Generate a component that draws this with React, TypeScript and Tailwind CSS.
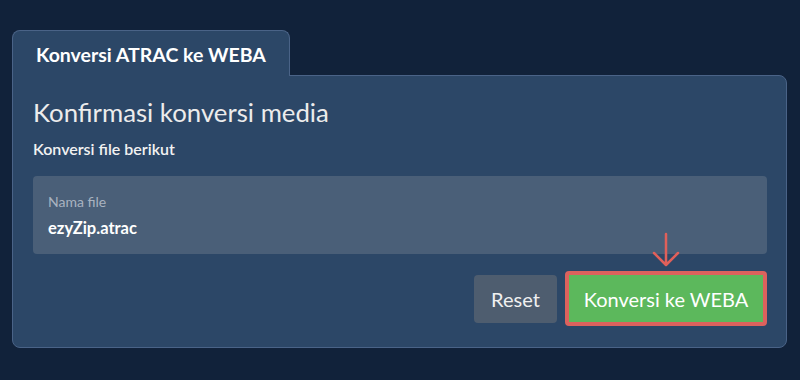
import React from "react";

export default function App() {
  return (
    <div
      className="w-[800px] h-[380px] bg-[#11223a] pl-[12px] pr-[13px] pt-[30px]"
      style={{ fontFamily: "Lato, 'Noto Sans', sans-serif" }}
    >
      <div className="relative z-10 -mb-px w-[278px] h-[46px] rounded-t-[8px] border border-b-0 border-[#4a6387] bg-[#2c4767] pl-[23px] pt-[12px] text-[19.5px] font-bold text-white leading-[24px]">
        Konversi ATRAC ke WEBA
      </div>
      <div className="rounded-b-[8px] rounded-tr-[8px] border border-[#4a6387] bg-[#2c4767] pl-[20px] pr-[19px] pt-[20px] pb-[21px]">
        <h1 className="text-[25.75px] leading-[32px] text-[#ececec]">Konfirmasi konversi media</h1>
        <p className="mt-[11px] text-[16px] leading-[20px] font-semibold text-[#f2f2f2]">Konversi file berikut</p>
        <div className="mt-[17px] h-[78px] rounded-[4px] bg-[#4a5f78] px-[15px] pt-[17px]">
          <div className="text-[14px] leading-[18px] text-[#a9b3c0]">Nama file</div>
          <div className="mt-[7px] text-[16.5px] leading-[20px] font-bold text-white">ezyZip.atrac</div>
        </div>
        <div className="mt-[17px] flex items-center justify-end gap-[8px]">
          <button className="h-[48px] w-[83px] rounded-[4px] bg-[#4e5d6f] text-[20px] text-[#f0f0f0]">Reset</button>
          <div className="relative">
            <svg className="absolute left-[85px] -top-[39px]" width="32" height="36" viewBox="0 0 32 36">
              <path d="M16 2 V32 M4 21 L16 33 L28 21" stroke="#e0605a" strokeWidth="2.5" fill="none" strokeLinecap="round" strokeLinejoin="round" />
            </svg>
            <button className="h-[55px] w-[202px] rounded-[4px] border-[4px] border-[#dc625d] bg-[#5cb85c] text-[20px] text-white">
              Konversi ke WEBA
            </button>
          </div>
        </div>
      </div>
    </div>
  );
}
